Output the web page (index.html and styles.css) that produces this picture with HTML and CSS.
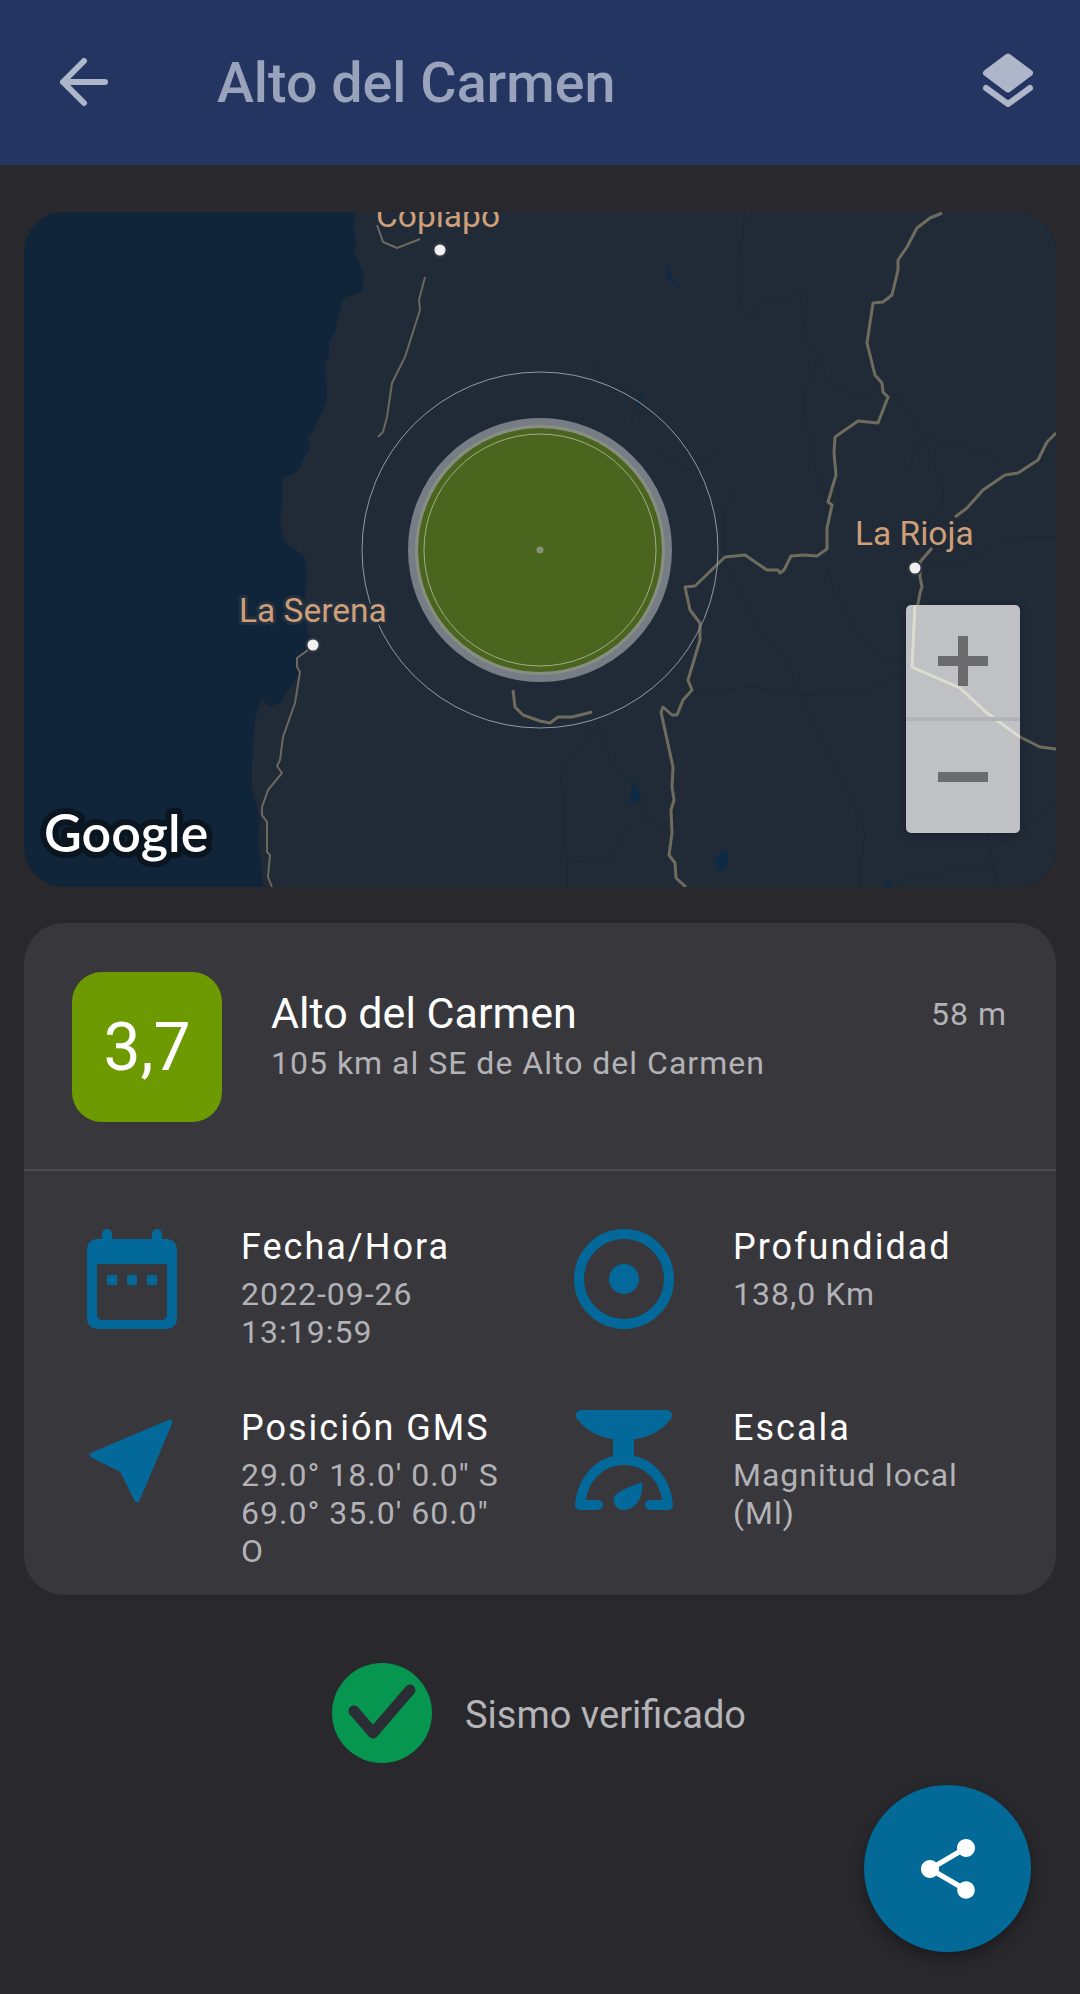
FILE: index.html
```html
<!DOCTYPE html>
<html lang="es">
<head>
  <meta charset="UTF-8">
  <title>Alto del Carmen</title>
  <link rel="stylesheet" href="styles.css">
</head>
<body>

<header class="topbar">
  <svg class="back-icon" viewBox="0 0 50 50"><path d="M3 24H45M24 3L3 24L24 45"/></svg>
  <h1 class="topbar-title">Alto del Carmen</h1>
  <svg class="layers-icon" viewBox="0 0 56 60">
    <polygon points="28,3.5 50,20 28,36.5 6,20"/>
    <polyline points="6,35 28,51 50,35"/>
  </svg>
</header>

<main>
  <section class="map">
    <svg class="map-canvas" viewBox="24 212 1032 675">
      <rect class="sea" x="24" y="212" width="1032" height="675"/>
      <polygon class="land" points="355,212 353,227 357,243 354,250 364,275 362,292 343,298 335,332 329,343 329,359 324,363 327,387 327,400 313,433 307,437 310,447 297,472 282,478 282,500 280,522 285,542 305,557 307,577 305,593 307,627 310,645 298,657 297,667 300,673 290,688 280,703 268,707 262,698 255,720 252,760 252,787 260,820 258,837 263,887 1056,887 1056,212"/>

      <g class="river">
        <polyline points="745,213 740,257 743,263 737,287 740,308 753,317 762,303 787,298 799,287 808,300 802,327 810,350 818,357 805,393 802,423 813,437 808,447 820,483 827,500"/>
        <polyline points="818,357 827,380 852,397 880,391 897,395 923,437 907,470"/>
        <polyline points="923,437 943,487 943,500 925,530"/>
        <polyline points="923,437 980,452 1000,460"/>
        <polyline points="723,560 760,633 787,663 800,693 850,797 865,833 858,887"/>
        <polyline points="690,692 753,687 800,695 860,693 907,672"/>
        <polyline points="828,570 833,590 858,632 887,660 907,663"/>
        <polyline points="597,723 583,747 560,767 565,827 563,853"/>
        <polyline points="597,723 610,760 628,777 648,817 668,830"/>
        <polyline points="567,887 567,860 610,862 625,830 648,817"/>
        <polyline points="987,853 1055,803"/>
        <polyline points="987,833 997,887"/>
        <polyline points="893,883 970,867 997,870"/>
        <polyline points="923,563 957,565 1007,538 1056,537"/>
        <polyline points="643,392 630,425 660,455 690,470 720,450"/>
        <polyline points="590,360 610,385 640,395"/>
        <polyline points="733,490 725,510 725,560"/>
      </g>

      <g class="lake">
        <polygon points="667,260 666,275 672,283 682,288 672,278"/>
        <polygon points="643,392 636,403 640,407"/>
        <polygon points="635,778 628,803 642,800"/>
        <polygon points="727,848 713,860 722,872 728,862"/>
        <polygon points="888,880 883,887 893,887"/>
      </g>

      <g class="road thin">
        <polyline points="425,277 419,300 420,310 405,357 392,383 387,417 383,432 378,437"/>
        <polyline points="377,225 383,242 397,248 420,239"/>
        <polyline points="308,650 297,658 297,667 300,672 295,703 283,737 280,760 277,766 282,773 268,790 262,807 262,815 267,822 267,852 270,855 268,877 272,887"/>
      </g>
      <g class="road">
        <polyline points="942,213 930,218 917,228 907,247 898,260 898,270 892,295 883,302 873,303 867,343 875,375 882,383 883,392 888,397 878,423 858,421 835,437 834,453 836,475 828,502 832,505 827,528 827,549 817,556 804,555 791,556 784,570 780,573 778,570 767,570 745,555 725,557 695,586 685,587 690,610 700,623 700,640 688,680 692,690 683,700 677,715 672,715 663,707 661,712 673,767 672,787 674,800 671,810 672,833 669,855 675,863 676,878 686,887"/>
        <polyline points="592,712 572,717 558,717 550,723 540,721 523,715 515,707 513,690"/>
        <polyline points="1056,433 1047,442 1038,460 1018,473 1005,475 983,490 967,508 955,517"/>
        <polyline points="932,548 920,562 920,577 922,587 920,593 915,620 912,667 960,688 987,713 1020,737 1040,747 1056,749"/>
      </g>

      <circle class="quake-outer" cx="540" cy="550" r="178"/>
      <circle class="quake-disc" cx="540" cy="550" r="127"/>
      <circle class="quake-rim" cx="540" cy="550" r="123.5"/>
      <circle class="quake-inner" cx="540" cy="550" r="116"/>
      <circle class="quake-center" cx="540" cy="550" r="3.5"/>

      <text class="place" x="376" y="227">Copiapó</text>
      <text class="place halo" x="239" y="622">La Serena</text>
      <text class="place" x="855" y="545">La Rioja</text>
      <circle class="city" cx="440" cy="250" r="6.5"/>
      <circle class="city" cx="313" cy="645" r="6.5"/>
      <circle class="city" cx="915" cy="568" r="6.5"/>

      <text class="google" x="44" y="852">Google</text>
    </svg>

    <div class="zoom-panel">
      <svg class="zoom-road" viewBox="906 605 114 228"><polyline points="915,605 912,667 960,688 987,713 1020,737"/></svg>
      <div class="zoom-btn"><svg viewBox="0 0 50 50"><path d="M0 25H50M25 0V50"/></svg></div>
      <div class="zoom-sep"></div>
      <div class="zoom-btn"><svg viewBox="0 0 50 50"><path d="M0 25H50"/></svg></div>
    </div>
  </section>

  <section class="card">
    <div class="card-head">
      <div class="badge">3,7</div>
      <div class="head-text">
        <div class="place-name">Alto del Carmen</div>
        <div class="place-sub">105 km al SE de Alto del Carmen</div>
      </div>
      <div class="ago">58 m</div>
    </div>
    <div class="details">
      <div class="detail">
        <svg class="detail-icon" viewBox="0 0 100 100">
          <path fill-rule="evenodd" d="M25 0a5 5 0 0 1 5 5v5h40v-5a5 5 0 0 1 10 0v5h5a10 10 0 0 1 10 10v70a10 10 0 0 1-10 10h-70a10 10 0 0 1-10-10v-70a10 10 0 0 1 10-10h5v-5a5 5 0 0 1 5-5zM15 35v51a5 5 0 0 0 5 5h60a5 5 0 0 0 5-5v-51z"/>
          <rect x="25" y="46" width="10" height="10"/>
          <rect x="45" y="46" width="10" height="10"/>
          <rect x="65" y="46" width="10" height="10"/>
        </svg>
        <div class="detail-text">
          <div class="detail-title">Fecha/Hora</div>
          <div class="detail-value">2022-09-26<br>13:19:59</div>
        </div>
      </div>
      <div class="detail">
        <svg class="detail-icon" viewBox="0 0 100 100">
          <circle class="ring" cx="50" cy="50" r="45"/>
          <circle cx="50" cy="50" r="15"/>
        </svg>
        <div class="detail-text">
          <div class="detail-title">Profundidad</div>
          <div class="detail-value">138,0 Km</div>
        </div>
      </div>
      <div class="detail">
        <svg class="detail-icon" viewBox="0 0 100 100">
          <polygon class="nav" points="88,12 10,45 40,60 55,90"/>
        </svg>
        <div class="detail-text">
          <div class="detail-title">Posición GMS</div>
          <div class="detail-value">29.0° 18.0' 0.0" S 69.0° 35.0' 60.0" O</div>
        </div>
      </div>
      <div class="detail">
        <svg class="detail-icon" viewBox="0 0 100 100">
          <path d="M8 0H92C98 0 100 6 96 10C85 24 68 30 50 30C32 30 15 24 4 10C0 6 2 0 8 0Z"/>
          <rect x="39" y="26" width="21" height="24"/>
          <path class="arch" d="M24 95H6C8 70 25 50 50 50C75 50 92 70 94 95H76"/>
          <path d="M68 72C70 86 62 100 50 100C42 100 38 92 40 87C43 81 58 76 68 72Z"/>
        </svg>
        <div class="detail-text">
          <div class="detail-title">Escala</div>
          <div class="detail-value">Magnitud local (Ml)</div>
        </div>
      </div>
    </div>
  </section>

  <div class="verified">
    <svg class="check-icon" viewBox="0 0 100 100">
      <circle cx="50" cy="50" r="50"/>
      <path d="M22 48L41 70L78 27"/>
    </svg>
    <span class="verified-text">Sismo verificado</span>
  </div>
</main>

<button class="fab" type="button">
  <svg viewBox="0 0 24 24"><path d="M18 16.08c-.76 0-1.44.3-1.96.77L8.91 12.7c.05-.23.09-.46.09-.7s-.04-.47-.09-.7l7.05-4.11c.54.5 1.25.81 2.04.81 1.66 0 3-1.34 3-3s-1.34-3-3-3-3 1.34-3 3c0 .24.04.47.09.7L8.04 9.81C7.5 9.31 6.79 9 6 9c-1.66 0-3 1.34-3 3s1.34 3 3 3c.79 0 1.5-.31 2.04-.81l7.12 4.16c-.05.21-.08.43-.08.65 0 1.61 1.31 2.92 2.92 2.92 1.61 0 2.92-1.31 2.92-2.92s-1.31-2.92-2.92-2.92z"/></svg>
</button>

</body>
</html>
```

FILE: styles.css
```css
body {
  margin: 0;
  position: relative;
  min-height: 1994px;
  background: #29282d;
  font-family: 'Roboto', sans-serif;
  color: #fff;
  overflow: hidden;
}
.topbar {
  height: 165px;
  display: flex;
  align-items: center;
  padding: 0 44px 0 60px;
  background: #253562;
}
.back-icon {
  width: 50px;
  height: 50px;
  flex: none;
  fill: none;
  stroke: #aeb6ca;
  stroke-width: 6;
  stroke-linecap: round;
  stroke-linejoin: round;
}
.topbar-title {
  flex: 1;
  margin: 0 0 0 107px;
  font-size: 55.6px;
  font-weight: 500;
  color: #9aa3bc;
}
.layers-icon {
  width: 56px;
  height: 60px;
  flex: none;
}
.layers-icon polygon {
  fill: #aeb6ca;
  stroke: #aeb6ca;
  stroke-width: 6;
  stroke-linejoin: round;
}
.layers-icon polyline {
  fill: none;
  stroke: #aeb6ca;
  stroke-width: 6;
  stroke-linejoin: round;
  stroke-linecap: round;
}
.map {
  position: relative;
  height: 675px;
  margin: 47px 24px 0;
  border-radius: 40px;
  overflow: hidden;
}
.map-canvas {
  display: block;
  width: 100%;
  height: 100%;
}
.sea { fill: #10253a; }
.land { fill: #212b37; }
.river polyline {
  fill: none;
  stroke: #1c2734;
  stroke-width: 1;
}
.lake polygon { fill: #0f2a45; }
.road polyline {
  fill: none;
  stroke: #6f6c5e;
  stroke-width: 3;
  stroke-linejoin: round;
}
.road.thin polyline {
  stroke: #6a695d;
  stroke-width: 2;
}
.quake-outer {
  fill: none;
  stroke: #8f9aa8;
  stroke-width: 1;
}
.quake-disc {
  fill: #4a651e;
  stroke: #777d85;
  stroke-width: 10;
}
.quake-rim {
  fill: none;
  stroke: #888e80;
  stroke-width: 3;
}
.quake-inner {
  fill: none;
  stroke: #a3ad8c;
  stroke-width: 1;
}
.quake-center { fill: #869273; }
.place {
  font-size: 33.5px;
  fill: #cf9f78;
}
.halo {
  paint-order: stroke;
  stroke: #22303f;
  stroke-width: 6;
  stroke-linejoin: round;
}
.city {
  fill: #f1f1f1;
  stroke: #303a45;
  stroke-width: 2;
}
.google {
  font-family: 'Lato', sans-serif;
  font-size: 52px;
  font-weight: 600;
  fill: #fff;
  paint-order: stroke;
  stroke: #0b1520;
  stroke-width: 12;
  stroke-linejoin: round;
}
.zoom-panel {
  position: absolute;
  left: 882px;
  top: 393px;
  width: 114px;
  height: 228px;
  border-radius: 5px;
  background: #bfc1c5;
  box-shadow: 0 2px 8px rgba(0, 0, 0, 0.25);
  overflow: hidden;
  display: flex;
  flex-direction: column;
}
.zoom-road {
  position: absolute;
  left: 0;
  top: 0;
  width: 114px;
  height: 228px;
  fill: none;
  stroke: #dedccf;
  stroke-width: 3;
}
.zoom-btn {
  position: relative;
  flex: 1;
  display: flex;
  align-items: center;
  justify-content: center;
}
.zoom-btn svg {
  width: 50px;
  height: 50px;
  fill: none;
  stroke: #6b6b6d;
  stroke-width: 10;
}
.zoom-sep {
  position: relative;
  height: 4px;
  background: #b1b3b7;
}
.card {
  margin: 36px 24px 0;
  border-radius: 40px;
  background: #38373c;
}
.card-head {
  display: flex;
  padding: 49px 49px 47px 48px;
  border-bottom: 2px solid #4d4c51;
}
.badge {
  width: 150px;
  height: 150px;
  flex: none;
  display: flex;
  align-items: center;
  justify-content: center;
  border-radius: 30px;
  background: #6d9a00;
  font-size: 66px;
}
.head-text {
  flex: 1;
  margin-left: 49px;
}
.place-name {
  font-size: 43px;
  line-height: 50px;
  margin-top: 16px;
}
.place-sub {
  font-size: 32px;
  line-height: 40px;
  margin-top: 5px;
  letter-spacing: 1px;
  color: #b2b2b7;
}
.ago {
  font-size: 32px;
  line-height: 40px;
  margin-top: 22px;
  letter-spacing: 1px;
  color: #b2b2b7;
}
.details {
  display: grid;
  grid-template-columns: 1fr 1fr;
  column-gap: 60px;
  row-gap: 54px;
  padding: 53px 50px 25px 58px;
}
.detail {
  display: flex;
  align-items: flex-start;
  gap: 59px;
}
.detail-icon {
  width: 100px;
  height: 100px;
  flex: none;
  margin-top: 5px;
  fill: #03699a;
}
.detail-icon .ring {
  fill: none;
  stroke: #03699a;
  stroke-width: 10;
}
.detail-icon .nav {
  stroke: #03699a;
  stroke-width: 5;
  stroke-linejoin: round;
}
.detail-icon .arch {
  fill: none;
  stroke: #03699a;
  stroke-width: 10;
  stroke-linecap: round;
  stroke-linejoin: round;
}
.detail-text {
  flex: 1;
  min-width: 0;
}
.detail-title {
  font-size: 36px;
  line-height: 46px;
  letter-spacing: 2px;
}
.detail-value {
  font-size: 32px;
  line-height: 38px;
  margin-top: 5px;
  letter-spacing: 1px;
  color: #b2b2b7;
}
.verified {
  display: flex;
  align-items: center;
  gap: 33px;
  margin-top: 68px;
  padding-left: 332px;
  font-size: 38px;
  color: #b5b5b8;
}
.verified-text {
  padding-top: 3px;
}
.check-icon {
  width: 100px;
  height: 100px;
  flex: none;
}
.check-icon circle { fill: #06964f; }
.check-icon path {
  fill: none;
  stroke: #2a2d33;
  stroke-width: 11;
  stroke-linecap: round;
  stroke-linejoin: round;
}
.fab {
  position: absolute;
  right: 49px;
  top: 1785px;
  width: 167px;
  height: 167px;
  padding: 0;
  border: none;
  border-radius: 50%;
  background: #036a97;
  box-shadow: 0 6px 14px rgba(0, 0, 0, 0.35);
  display: flex;
  align-items: center;
  justify-content: center;
}
.fab svg {
  width: 72px;
  height: 72px;
  fill: #fff;
}
```
